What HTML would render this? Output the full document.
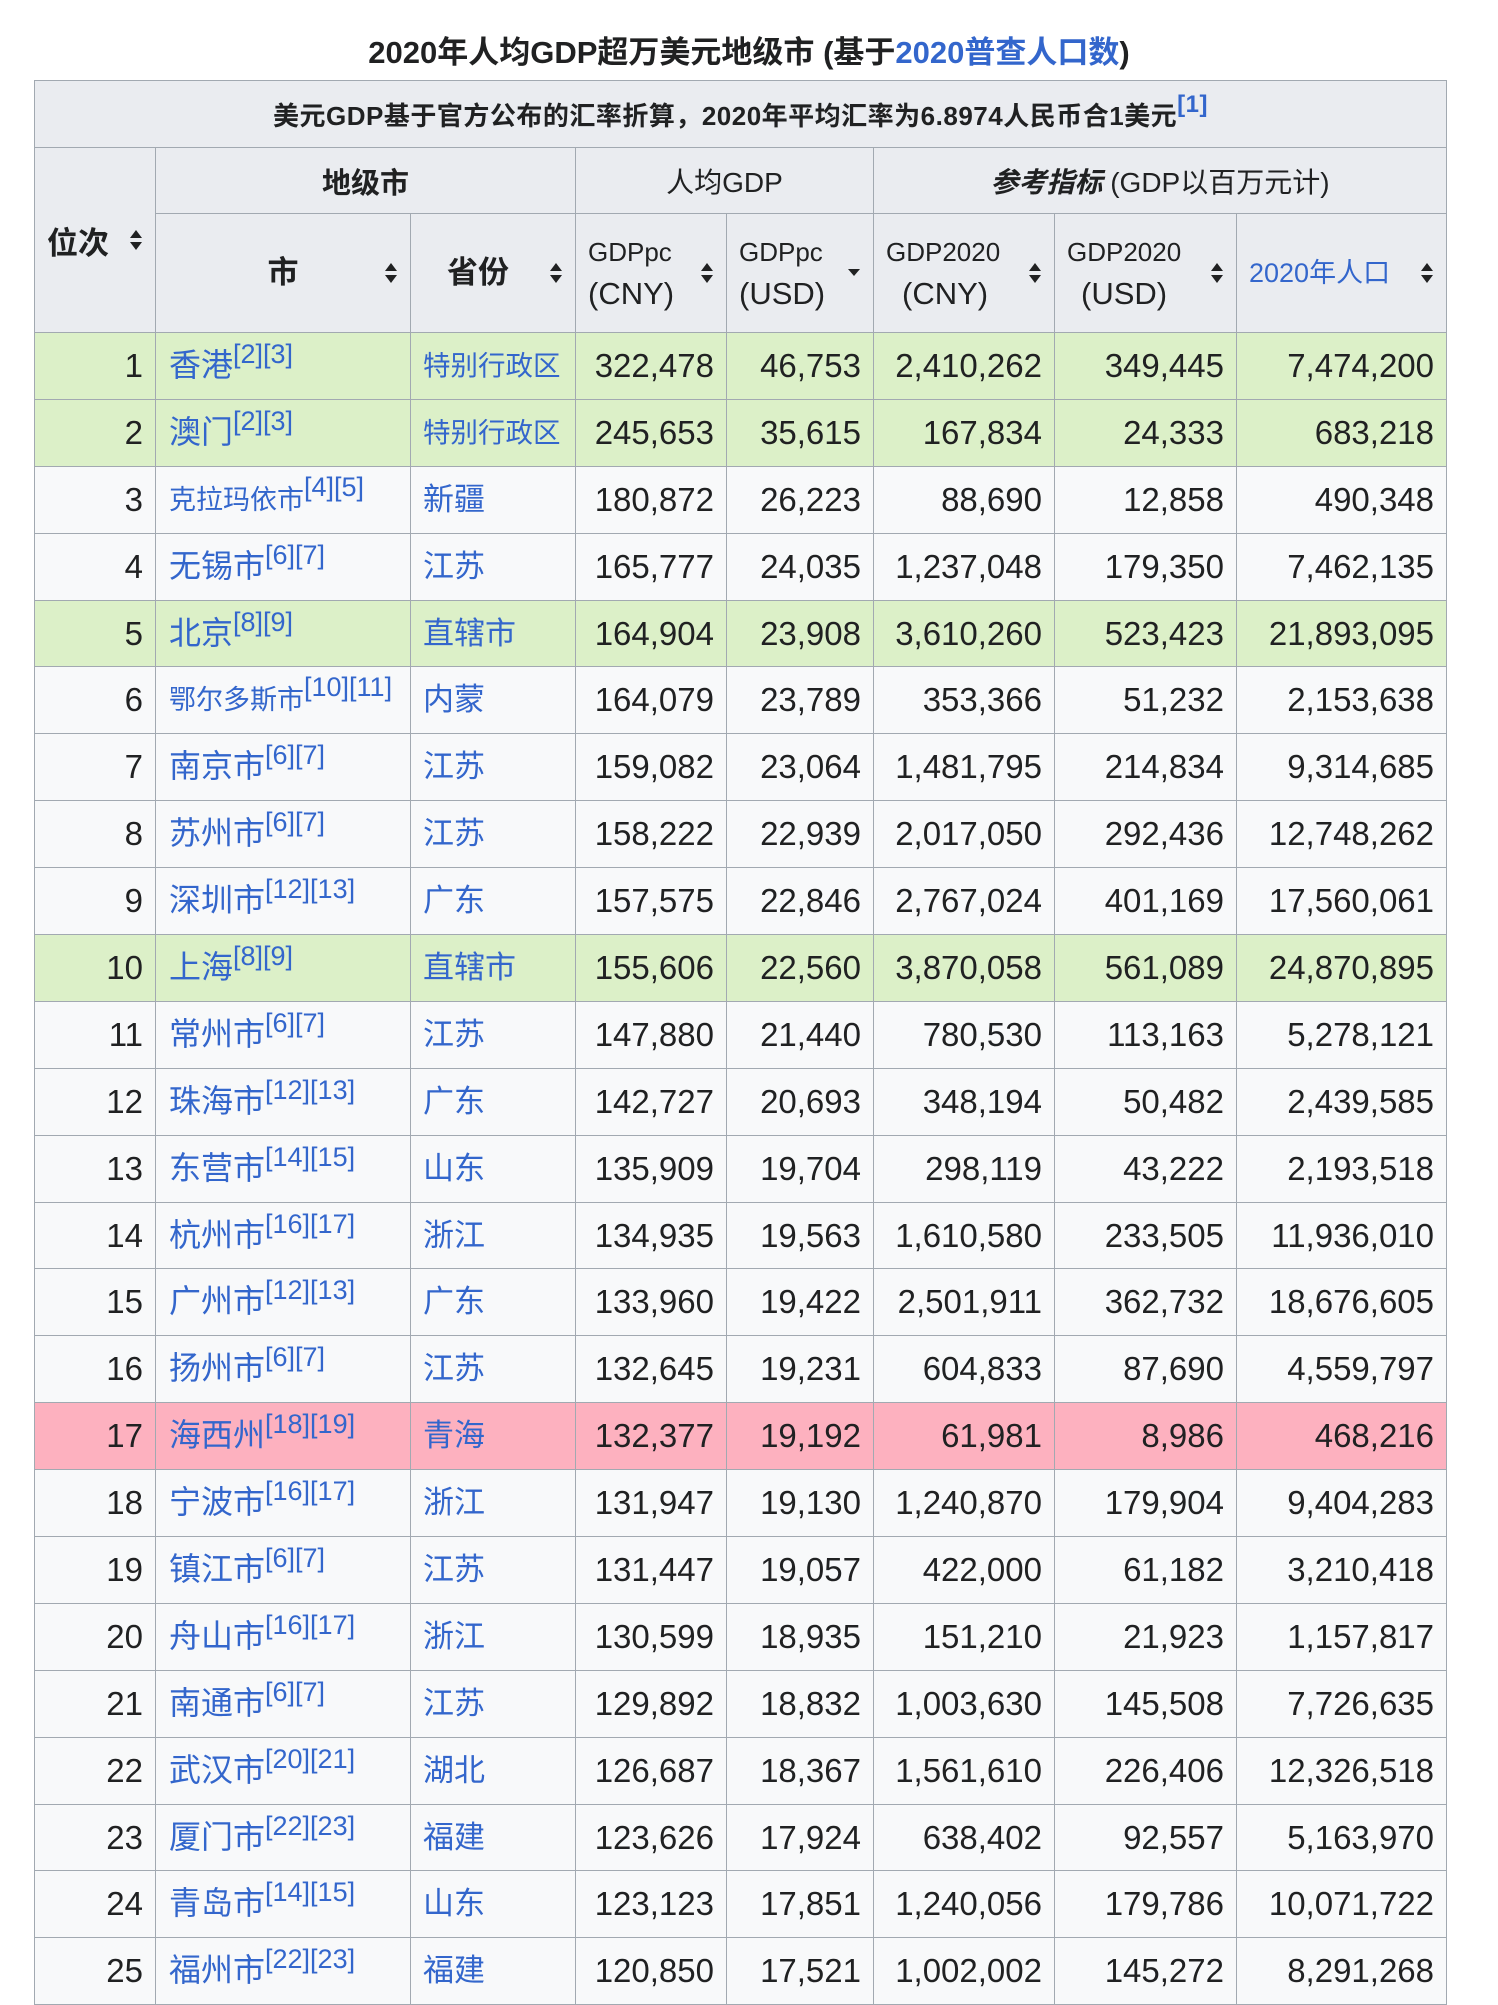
<!DOCTYPE html>
<html><head><meta charset="utf-8">
<style>
*{margin:0;padding:0;box-sizing:border-box}
body{width:1498px;height:1978px;overflow:hidden;background:#fff;font-family:"Liberation Sans","Noto Sans CJK SC",sans-serif;color:#202122}
.title{position:absolute;top:33px;left:0;width:1498px;text-align:center;font-size:31px;font-weight:bold;line-height:40px}
a{color:#3366cc;text-decoration:none}
table{position:absolute;left:34px;top:80px;width:1412px;border-collapse:collapse;table-layout:fixed}
td,th{border:1.5px solid #a2a9b1;overflow:hidden;white-space:nowrap}
th{background:#eaecf0;font-weight:bold;font-size:29px;position:relative}
tr.cap th{height:67px;font-size:26px;letter-spacing:0.5px}
tr.h1 th{height:66px}
tr.h2 th{height:119px}
tr.b td{height:66.9px;background:#f8f9fa;font-size:33px;text-align:right;padding-right:12px;vertical-align:middle;line-height:36px}
tr.g td{background:#dcf0c8}
tr.p td{background:#fdb1bf}
tr.b td.nm{text-align:left;padding-left:13px;font-size:32px}
tr.b td.nm.s{font-size:27px}
tr.b td.pv{text-align:left;padding-left:12px;font-size:31px}
tr.b td.pv.t{font-size:27.5px}
sup{font-size:27px;vertical-align:0;position:relative;top:-13px}
.si{position:absolute;right:12px;top:50%;margin-top:-11px}
.h2 th{font-weight:normal;text-align:left;padding-left:12px;line-height:42px}
.h2 .sm{font-size:26px}
.h2 .bg{font-size:31px}
</style></head><body>
<div class="title">2020年人均GDP超万美元地级市 <span>(基于<a href="#">2020普查人口数</a>)</span></div>
<table>
<colgroup><col style="width:121px"><col style="width:255px"><col style="width:165px"><col style="width:151px"><col style="width:147px"><col style="width:181px"><col style="width:182px"><col style="width:210px"></colgroup>
<tr class="cap"><th colspan="8">美元GDP基于官方公布的汇率折算，2020年平均汇率为6.8974人民币合1美元<sup style="font-size:24px"><a href="#">[1]</a></sup></th></tr>
<tr class="h1"><th rowspan="2" style="text-align:left;padding-left:12px;vertical-align:middle;font-size:31px">位次<svg class="si" width="14" height="22" viewBox="0 0 14 22"><path d="M7 1L13 9H1Z M7 21L13 13H1Z" fill="#202122"/></svg></th>
<th colspan="2">地级市</th><th colspan="2" style="font-weight:normal;font-size:28px">人均GDP</th><th colspan="3" style="font-weight:normal;font-size:28px"><b><i>参考指标</i></b> (GDP以百万元计)</th></tr>
<tr class="h2">
<th style="text-align:center;padding-left:0;font-weight:bold;font-size:31px">市<svg class="si" width="14" height="22" viewBox="0 0 14 22"><path d="M7 1L13 9H1Z M7 21L13 13H1Z" fill="#202122"/></svg></th>
<th style="font-weight:bold;font-size:31px;padding-left:36px">省份<svg class="si" width="14" height="22" viewBox="0 0 14 22"><path d="M7 1L13 9H1Z M7 21L13 13H1Z" fill="#202122"/></svg></th>
<th><span class="sm">GDPpc</span><br><span class="bg">(CNY)</span><svg class="si" width="14" height="22" viewBox="0 0 14 22"><path d="M7 1L13 9H1Z M7 21L13 13H1Z" fill="#202122"/></svg></th>
<th><span class="sm">GDPpc</span><br><span class="bg">(USD)</span><svg class="si" width="14" height="22" viewBox="0 0 14 22"><path d="M1 7H13L7 14Z" fill="#202122"/></svg></th>
<th><span class="sm">GDP2020</span><br><span class="bg" style="padding-left:16px">(CNY)</span><svg class="si" width="14" height="22" viewBox="0 0 14 22"><path d="M7 1L13 9H1Z M7 21L13 13H1Z" fill="#202122"/></svg></th>
<th><span class="sm">GDP2020</span><br><span class="bg" style="padding-left:14px">(USD)</span><svg class="si" width="14" height="22" viewBox="0 0 14 22"><path d="M7 1L13 9H1Z M7 21L13 13H1Z" fill="#202122"/></svg></th>
<th style="font-size:27px"><a href="#">2020年人口</a><svg class="si" width="14" height="22" viewBox="0 0 14 22"><path d="M7 1L13 9H1Z M7 21L13 13H1Z" fill="#202122"/></svg></th>
</tr>
<tr class="b g"><td>1</td><td class="nm"><a href="#">香港</a><sup><a href="#">[2][3]</a></sup></td><td class="pv t"><a href="#">特别行政区</a></td><td>322,478</td><td>46,753</td><td>2,410,262</td><td>349,445</td><td>7,474,200</td></tr>
<tr class="b g"><td>2</td><td class="nm"><a href="#">澳门</a><sup><a href="#">[2][3]</a></sup></td><td class="pv t"><a href="#">特别行政区</a></td><td>245,653</td><td>35,615</td><td>167,834</td><td>24,333</td><td>683,218</td></tr>
<tr class="b"><td>3</td><td class="nm s"><a href="#">克拉玛依市</a><sup><a href="#">[4][5]</a></sup></td><td class="pv"><a href="#">新疆</a></td><td>180,872</td><td>26,223</td><td>88,690</td><td>12,858</td><td>490,348</td></tr>
<tr class="b"><td>4</td><td class="nm"><a href="#">无锡市</a><sup><a href="#">[6][7]</a></sup></td><td class="pv"><a href="#">江苏</a></td><td>165,777</td><td>24,035</td><td>1,237,048</td><td>179,350</td><td>7,462,135</td></tr>
<tr class="b g"><td>5</td><td class="nm"><a href="#">北京</a><sup><a href="#">[8][9]</a></sup></td><td class="pv"><a href="#">直辖市</a></td><td>164,904</td><td>23,908</td><td>3,610,260</td><td>523,423</td><td>21,893,095</td></tr>
<tr class="b"><td>6</td><td class="nm s"><a href="#">鄂尔多斯市</a><sup><a href="#">[10][11]</a></sup></td><td class="pv"><a href="#">内蒙</a></td><td>164,079</td><td>23,789</td><td>353,366</td><td>51,232</td><td>2,153,638</td></tr>
<tr class="b"><td>7</td><td class="nm"><a href="#">南京市</a><sup><a href="#">[6][7]</a></sup></td><td class="pv"><a href="#">江苏</a></td><td>159,082</td><td>23,064</td><td>1,481,795</td><td>214,834</td><td>9,314,685</td></tr>
<tr class="b"><td>8</td><td class="nm"><a href="#">苏州市</a><sup><a href="#">[6][7]</a></sup></td><td class="pv"><a href="#">江苏</a></td><td>158,222</td><td>22,939</td><td>2,017,050</td><td>292,436</td><td>12,748,262</td></tr>
<tr class="b"><td>9</td><td class="nm"><a href="#">深圳市</a><sup><a href="#">[12][13]</a></sup></td><td class="pv"><a href="#">广东</a></td><td>157,575</td><td>22,846</td><td>2,767,024</td><td>401,169</td><td>17,560,061</td></tr>
<tr class="b g"><td>10</td><td class="nm"><a href="#">上海</a><sup><a href="#">[8][9]</a></sup></td><td class="pv"><a href="#">直辖市</a></td><td>155,606</td><td>22,560</td><td>3,870,058</td><td>561,089</td><td>24,870,895</td></tr>
<tr class="b"><td>11</td><td class="nm"><a href="#">常州市</a><sup><a href="#">[6][7]</a></sup></td><td class="pv"><a href="#">江苏</a></td><td>147,880</td><td>21,440</td><td>780,530</td><td>113,163</td><td>5,278,121</td></tr>
<tr class="b"><td>12</td><td class="nm"><a href="#">珠海市</a><sup><a href="#">[12][13]</a></sup></td><td class="pv"><a href="#">广东</a></td><td>142,727</td><td>20,693</td><td>348,194</td><td>50,482</td><td>2,439,585</td></tr>
<tr class="b"><td>13</td><td class="nm"><a href="#">东营市</a><sup><a href="#">[14][15]</a></sup></td><td class="pv"><a href="#">山东</a></td><td>135,909</td><td>19,704</td><td>298,119</td><td>43,222</td><td>2,193,518</td></tr>
<tr class="b"><td>14</td><td class="nm"><a href="#">杭州市</a><sup><a href="#">[16][17]</a></sup></td><td class="pv"><a href="#">浙江</a></td><td>134,935</td><td>19,563</td><td>1,610,580</td><td>233,505</td><td>11,936,010</td></tr>
<tr class="b"><td>15</td><td class="nm"><a href="#">广州市</a><sup><a href="#">[12][13]</a></sup></td><td class="pv"><a href="#">广东</a></td><td>133,960</td><td>19,422</td><td>2,501,911</td><td>362,732</td><td>18,676,605</td></tr>
<tr class="b"><td>16</td><td class="nm"><a href="#">扬州市</a><sup><a href="#">[6][7]</a></sup></td><td class="pv"><a href="#">江苏</a></td><td>132,645</td><td>19,231</td><td>604,833</td><td>87,690</td><td>4,559,797</td></tr>
<tr class="b p"><td>17</td><td class="nm"><a href="#">海西州</a><sup><a href="#">[18][19]</a></sup></td><td class="pv"><a href="#">青海</a></td><td>132,377</td><td>19,192</td><td>61,981</td><td>8,986</td><td>468,216</td></tr>
<tr class="b"><td>18</td><td class="nm"><a href="#">宁波市</a><sup><a href="#">[16][17]</a></sup></td><td class="pv"><a href="#">浙江</a></td><td>131,947</td><td>19,130</td><td>1,240,870</td><td>179,904</td><td>9,404,283</td></tr>
<tr class="b"><td>19</td><td class="nm"><a href="#">镇江市</a><sup><a href="#">[6][7]</a></sup></td><td class="pv"><a href="#">江苏</a></td><td>131,447</td><td>19,057</td><td>422,000</td><td>61,182</td><td>3,210,418</td></tr>
<tr class="b"><td>20</td><td class="nm"><a href="#">舟山市</a><sup><a href="#">[16][17]</a></sup></td><td class="pv"><a href="#">浙江</a></td><td>130,599</td><td>18,935</td><td>151,210</td><td>21,923</td><td>1,157,817</td></tr>
<tr class="b"><td>21</td><td class="nm"><a href="#">南通市</a><sup><a href="#">[6][7]</a></sup></td><td class="pv"><a href="#">江苏</a></td><td>129,892</td><td>18,832</td><td>1,003,630</td><td>145,508</td><td>7,726,635</td></tr>
<tr class="b"><td>22</td><td class="nm"><a href="#">武汉市</a><sup><a href="#">[20][21]</a></sup></td><td class="pv"><a href="#">湖北</a></td><td>126,687</td><td>18,367</td><td>1,561,610</td><td>226,406</td><td>12,326,518</td></tr>
<tr class="b"><td>23</td><td class="nm"><a href="#">厦门市</a><sup><a href="#">[22][23]</a></sup></td><td class="pv"><a href="#">福建</a></td><td>123,626</td><td>17,924</td><td>638,402</td><td>92,557</td><td>5,163,970</td></tr>
<tr class="b"><td>24</td><td class="nm"><a href="#">青岛市</a><sup><a href="#">[14][15]</a></sup></td><td class="pv"><a href="#">山东</a></td><td>123,123</td><td>17,851</td><td>1,240,056</td><td>179,786</td><td>10,071,722</td></tr>
<tr class="b"><td>25</td><td class="nm"><a href="#">福州市</a><sup><a href="#">[22][23]</a></sup></td><td class="pv"><a href="#">福建</a></td><td>120,850</td><td>17,521</td><td>1,002,002</td><td>145,272</td><td>8,291,268</td></tr>
</table>
</body></html>
